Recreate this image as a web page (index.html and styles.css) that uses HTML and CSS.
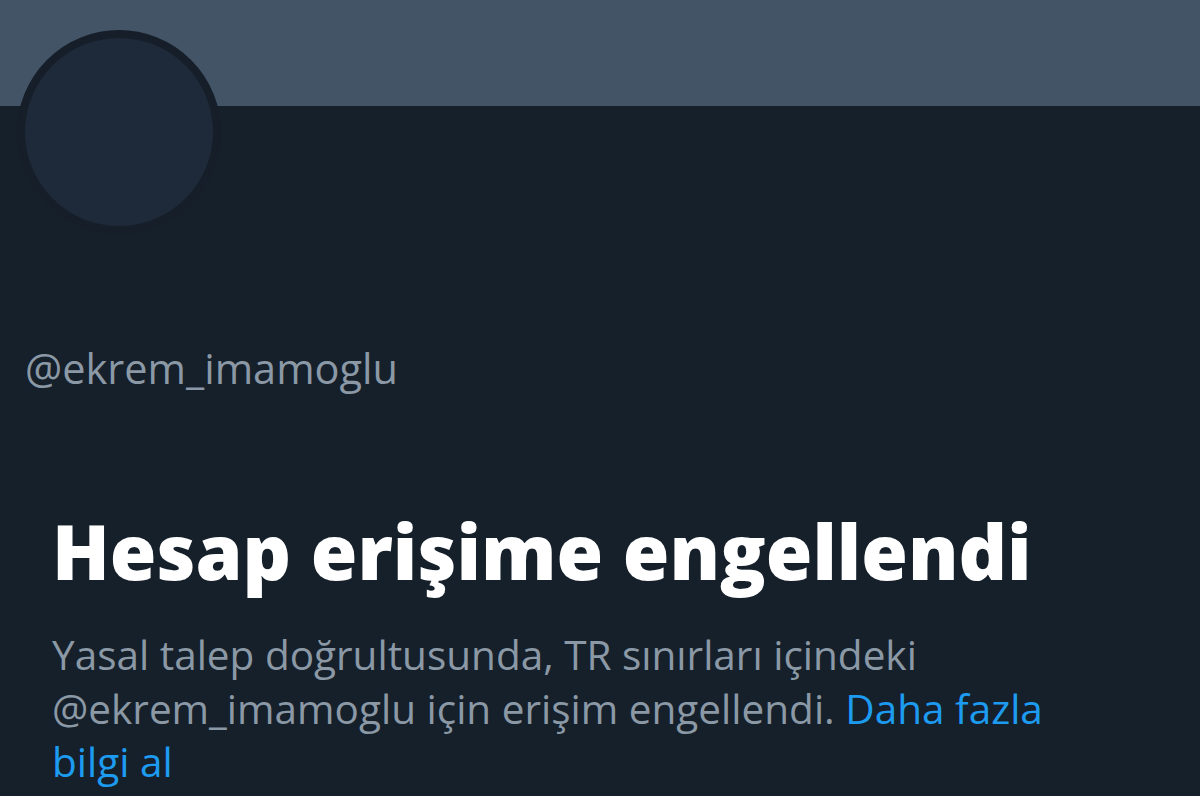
FILE: index.html
```html
<!DOCTYPE html>
<html>
<head>
  <title>@ekrem_imamoglu</title>
  <link rel="stylesheet" href="styles.css">
</head>
<body>
  <div class="banner"></div>

  <div class="profile">
    <div class="avatar"></div>
    <div class="handle">@ekrem_imamoglu</div>
  </div>

  <div class="notice">
    <h1>Hesap erişime engellendi</h1>
    <p>Yasal talep doğrultusunda, TR sınırları içindeki @ekrem_imamoglu için erişim engellendi. <a href="#">Daha fazla bilgi al</a></p>
  </div>
</body>
</html>
```

FILE: styles.css
```css
body {
  margin: 0;
  padding: 0;
  background-color: #15202b;
  font-family: "Open Sans", Roboto, sans-serif;
  overflow: hidden;
}

.banner {
  height: 106px;
  background-color: #425466;
}

.profile {
  padding: 0 25px;
}

.avatar {
  width: 188px;
  height: 188px;
  margin-top: -76px;
  margin-left: -8px;
  border: 8px solid #151e29;
  border-radius: 50%;
  background-color: #1e2a39;
}

.handle {
  margin-top: 108px;
  font-size: 41.5px;
  line-height: 52px;
  color: #8b98a5;
}

.notice {
  padding: 0 52px;
  margin-top: 112px;
}

.notice h1 {
  margin: 0;
  font-size: 75.5px;
  line-height: 90px;
  font-weight: 800;
  color: #fff;
}

.notice p {
  margin: 32px 0 0;
  font-size: 40.5px;
  line-height: 53.5px;
  color: #8b98a5;
  max-width: 1045px;
}

.notice a {
  color: #1d9bf0;
  text-decoration: none;
}
```
